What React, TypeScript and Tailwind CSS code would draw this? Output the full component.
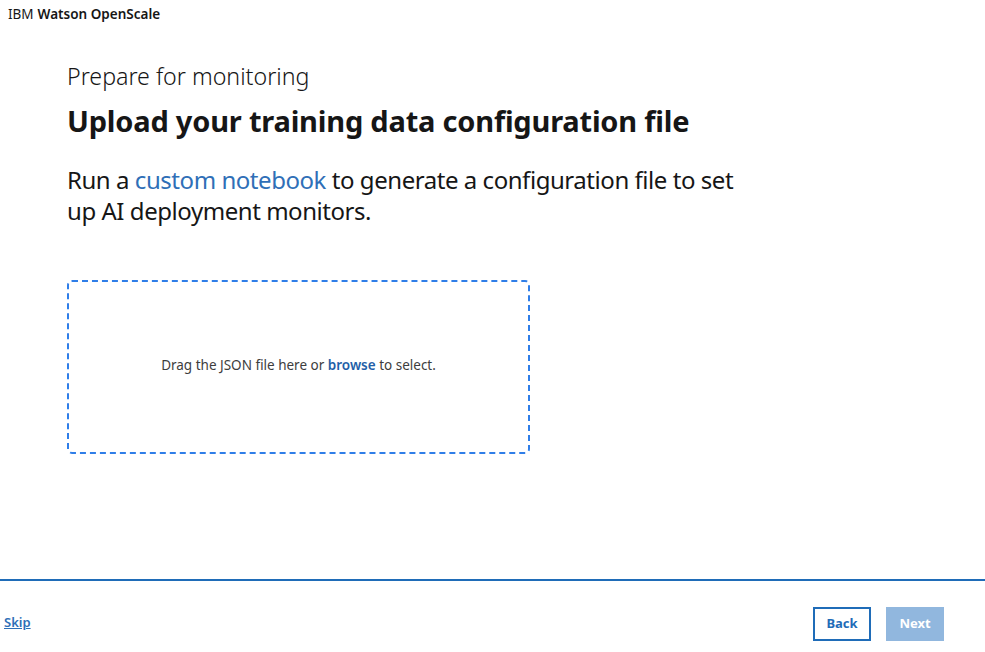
export default function App() {
  return (
    <div
      className="h-[652px] w-full flex flex-col bg-white text-[#161616]"
      style={{ fontFamily: '"Noto Sans", "Open Sans", sans-serif' }}
    >
      <header className="h-[28px] flex items-center px-[8px] text-[13.5px]">
        <span className="font-normal">IBM</span>
        <span className="font-semibold ml-[4px]">Watson OpenScale</span>
      </header>

      <main className="flex-1 pl-[67px]">
        <p className="mt-[33px] text-[23.2px] font-light leading-[30px]">Prepare for monitoring</p>
        <h1 className="mt-[12px] text-[29px] font-bold leading-[36px] tracking-[-0.2px]">
          Upload your training data configuration file
        </h1>
        <p className="mt-[25px] w-[680px] text-[24px] leading-[31px] tracking-[-0.45px]">
          Run a <a className="text-[#2f6fb7]">custom notebook</a> to generate a configuration file to set up AI deployment monitors.
        </p>
        <div className="mt-[54px] w-[463px] h-[174px] border-2 border-dashed border-[#2f7ee8] rounded-[5px] flex items-center justify-center pb-[4px]">
          <p className="text-[13.5px] text-[#3d3d3d]">
            Drag the JSON file here or <a className="font-semibold text-[#1f5fa8]">browse</a> to select.
          </p>
        </div>
      </main>

      <footer className="h-[73px] border-t-2 border-[#1f6cb8] flex items-start justify-between pt-[26px] pl-[4px] pr-[41px]">
        <div className="h-[34px] flex items-center">
          <a className="text-[13px] font-semibold text-[#2f6fb7] underline -mt-[3px]">Skip</a>
        </div>
        <div className="flex gap-[15px]">
          <button className="w-[58px] h-[34px] border-2 border-[#1f6cb8] bg-white text-[#1f6cb8] text-[13px] font-bold">
            Back
          </button>
          <button className="w-[58px] h-[34px] bg-[#91b7de] text-white text-[13px] font-bold">
            Next
          </button>
        </div>
      </footer>
    </div>
  );
}
